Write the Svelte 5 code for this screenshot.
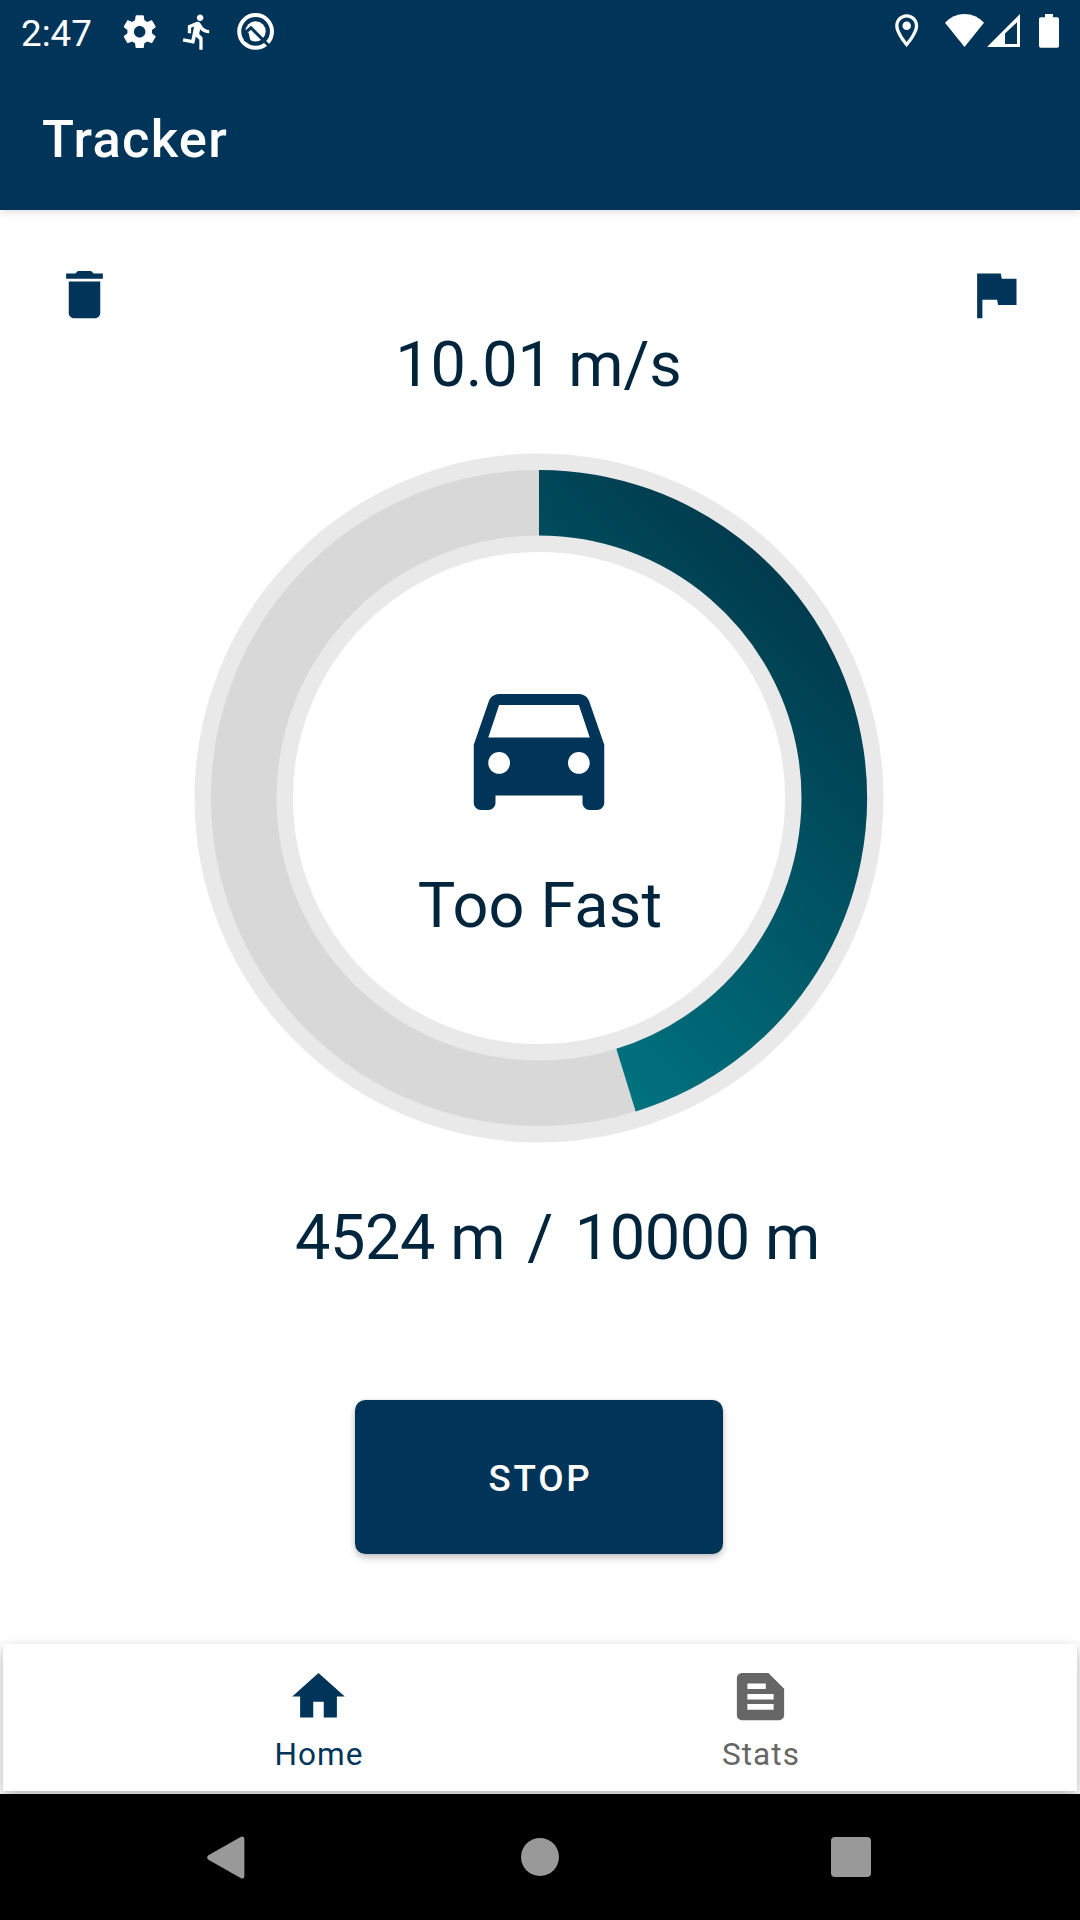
<script>
  const speed = '10.01 m/s';
  const distance = 4524;
  const goal = 10000;

  const band = 295.3;
  const angle = (distance / goal) * 2 * Math.PI;
  const endX = 345 + band * Math.sin(angle);
  const endY = 345 - band * Math.cos(angle);
  const large = distance / goal > 0.5 ? 1 : 0;
  const arc = `M345 ${345 - band}A${band} ${band} 0 ${large} 1 ${endX} ${endY}`;
</script>

<div class="screen">
  <header>
    <div class="status">
      <span class="clock">2:47</span>
      <svg class="gear" viewBox="0 0 24 24"><path d="M19.43 12.98c.04-.32.07-.64.07-.98s-.03-.66-.07-.98l2.11-1.65c.19-.15.24-.42.12-.64l-2-3.46c-.12-.22-.39-.3-.61-.22l-2.49 1c-.52-.4-1.08-.73-1.69-.98l-.38-2.65C14.46 2.18 14.25 2 14 2h-4c-.25 0-.46.18-.49.42l-.38 2.65c-.61.25-1.17.59-1.69.98l-2.49-1c-.23-.09-.49 0-.61.22l-2 3.46c-.13.22-.07.49.12.64l2.11 1.65c-.04.32-.07.65-.07.98s.03.66.07.98l-2.11 1.65c-.19.15-.24.42-.12.64l2 3.46c.12.22.39.3.61.22l2.49-1c.52.4 1.08.73 1.69.98l.38 2.65c.03.24.24.42.49.42h4c.25 0 .46-.18.49-.42l.38-2.65c.61-.25 1.17-.59 1.69-.98l2.49 1c.23.09.49 0 .61-.22l2-3.46c.12-.22.07-.49-.12-.64l-2.11-1.65zM12 15.5c-1.93 0-3.5-1.57-3.5-3.5s1.57-3.5 3.5-3.5 3.5 1.57 3.5 3.5-1.57 3.5-3.5 3.5z" /></svg>
      <svg class="runner" viewBox="0 0 24 24"><path d="M13.49 5.48c1.1 0 2-.9 2-2s-.9-2-2-2-2 .9-2 2 .9 2 2 2zm-3.6 13.9l1-4.4 2.1 2v6h2v-7.5l-2.1-2 .6-3c1.3 1.5 3.3 2.5 5.5 2.5v-2c-1.9 0-3.5-1-4.3-2.4l-1-1.6c-.4-.6-1-1-1.7-1-.3 0-.5.1-.8.1l-5.2 2.2v4.7h2v-3.4l1.8-.7-1.6 8.1-4.9-1-.4 2 7 1.4z" /></svg>
      <svg class="debug" viewBox="0 0 39 39">
        <circle class="hoop" cx="19.4" cy="19.2" r="16.2" />
        <circle cx="19.4" cy="19.2" r="10" />
        <path class="cut" d="M8 21.4L14.8 15.6L32.6 33.4" />
        <path class="notch" d="M8 21L12.4 20.2L14.6 29.6L8 29Z" />
      </svg>
      <span class="space"></span>
      <svg class="pin" viewBox="0 0 24 24"><path d="M12 2C8.13 2 5 5.13 5 9c0 5.25 7 13 7 13s7-7.75 7-13c0-3.87-3.13-7-7-7zM7 9c0-2.76 2.24-5 5-5s5 2.24 5 5c0 2.88-2.88 7.19-5 9.88C9.92 16.21 7 11.85 7 9z" /><circle cx="12" cy="9" r="2.6" /></svg>
      <svg class="wifi" viewBox="0 0 39 33"><path d="M19.5 33L0 8.8Q8 0 19.5 0T39 8.8Z" /></svg>
      <svg class="cell" viewBox="0 0 33 33"><path fill-rule="evenodd" d="M33 0V33H0ZM30 8.2L18 19.6V30H30Z" /></svg>
      <svg class="battery" viewBox="0 0 20 34"><path d="M6 0h8v3.2h4.2a1.8 1.8 0 0 1 1.8 1.8v27a1.8 1.8 0 0 1-1.8 1.8H1.8A1.8 1.8 0 0 1 0 32V5a1.8 1.8 0 0 1 1.8-1.8H6z" /></svg>
    </div>
    <h1>Tracker</h1>
  </header>

  <main>
    <div class="actions">
      <svg viewBox="0 0 24 24"><path d="M6 19c0 1.1.9 2 2 2h8c1.1 0 2-.9 2-2V7H6v12zM19 4h-3.5l-1-1h-5l-1 1H5v2h14V4z" /></svg>
      <svg viewBox="0 0 24 24"><path d="M14.4 6L14 4H5v17h2v-7h5.6l.4 2h7V6z" /></svg>
    </div>
    <p class="speed">{speed}</p>

    <div class="dial">
      <svg class="ring" viewBox="0 0 690 690">
        <defs>
          <linearGradient id="sweep" gradientUnits="userSpaceOnUse" x1="577" y1="113" x2="227" y2="463">
            <stop offset="0" stop-color="#003b4e" />
            <stop offset="0.25" stop-color="#004a5b" />
            <stop offset="1" stop-color="#007481" />
          </linearGradient>
        </defs>
        <circle class="edge" cx="345" cy="345" r={band} />
        <circle class="track" cx="345" cy="345" r={band} />
        <path class="value" d={arc} />
      </svg>
      <div class="center">
        <svg class="car" viewBox="0 0 24 24"><path d="M18.92 5.01C18.72 4.42 18.16 4 17.5 4h-11c-.66 0-1.21.42-1.42 1.01L3 11v8c0 .55.45 1 1 1h1c.55 0 1-.45 1-1v-1h12v1c0 .55.45 1 1 1h1c.55 0 1-.45 1-1v-8l-2.08-5.99zM6.5 15c-.83 0-1.5-.67-1.5-1.5S5.67 12 6.5 12s1.5.67 1.5 1.5S7.33 15 6.5 15zm11 0c-.83 0-1.5-.67-1.5-1.5s.67-1.5 1.5-1.5 1.5.67 1.5 1.5-.67 1.5-1.5 1.5zM5 10l1.5-4.5h11L19 10H5z" /></svg>
        <p>Too Fast</p>
      </div>
    </div>

    <div class="distance"><span>{distance} m</span><span>/</span><span>{goal} m</span></div>
    <button>STOP</button>
  </main>

  <div class="tabs-wrap">
    <nav class="tabs">
      <div class="tab on">
        <svg viewBox="0 0 24 24"><path d="M10 20v-6h4v6h5v-8h3L12 3 2 12h3v8z" /></svg>
        <span>Home</span>
      </div>
      <div class="tab">
        <svg viewBox="0 0 24 24"><path fill-rule="evenodd" d="M15 3H5c-1.1 0-2 .9-2 2v14c0 1.1.9 2 2 2h14c1.1 0 2-.9 2-2V9zM7 7h7v2.1H7zM17 17H7v-2.1h10zM17 13.1H7v-2.1h10z" /></svg>
        <span>Stats</span>
      </div>
    </nav>
  </div>

  <footer>
    <svg class="back" viewBox="0 0 38 43"><path d="M1 19.6Q-.6 21.5 1 23.4L34 42.3Q37.4 43.4 37.4 40V3Q37.4-.4 34 .7Z" /></svg>
    <span class="home"></span>
    <span class="recent"></span>
  </footer>
</div>

<style>
  :global(body) {
    margin: 0;
    overflow: hidden;
  }
  .screen {
    width: 1080px;
    height: 1920px;
    display: flex;
    flex-direction: column;
    background: #fff;
    font-family: Roboto, sans-serif;
    overflow: hidden;
  }
  svg {
    display: block;
    flex: none;
  }
  p, h1 {
    margin: 0;
  }
  header {
    height: 210px;
    box-sizing: border-box;
    flex: none;
    background: #003459;
    color: #fff;
    fill: #fff;
    box-shadow: 0 1px 8px rgba(0, 0, 0, 0.18);
  }
  .status {
    height: 63px;
    display: flex;
    align-items: flex-start;
    padding: 0 21px;
    box-sizing: border-box;
  }
  .clock {
    width: 99px;
    padding-top: 12px;
    font-size: 36.75px;
    line-height: 44px;
  }
  .gear, .runner, .debug, .pin {
    width: 39.4px;
    height: 39.4px;
    margin-top: 12px;
  }
  .runner {
    margin-left: 19px;
  }
  .debug {
    margin-left: 18.4px;
  }
  .hoop {
    fill: none;
    stroke: #fff;
    stroke-width: 4;
  }
  .cut {
    fill: none;
    stroke: #003459;
    stroke-width: 3;
  }
  .notch {
    fill: #003459;
  }
  .space {
    flex: 1;
  }
  .pin {
    margin-top: 11px;
    margin-right: 19px;
  }
  .wifi {
    width: 39px;
    height: 33px;
    margin: 14px 3px 0 0;
  }
  .cell {
    width: 33px;
    height: 33px;
    margin: 14px 19px 0 0;
  }
  .battery {
    width: 20px;
    height: 34px;
    margin-top: 14px;
  }
  h1 {
    padding: 45px 0 0 42px;
    font-size: 52.5px;
    line-height: 62px;
    font-weight: 500;
    letter-spacing: 1.3px;
  }
  main {
    flex: 1;
    display: flex;
    flex-direction: column;
    align-items: center;
    padding: 53px 2px 0 0;
    color: #00253d;
  }
  .actions {
    width: 974px;
    display: flex;
    justify-content: space-between;
    padding-left: 2px;
    fill: #003459;
  }
  .actions svg {
    width: 63px;
    height: 63px;
  }
  .speed, .center p, .distance {
    font-size: 63px;
    line-height: 74px;
  }
  .speed {
    margin-top: 2px;
    padding-right: 1px;
    letter-spacing: -.15px;
  }
  .dial {
    width: 690px;
    height: 690px;
    margin-top: 51px;
    display: grid;
    justify-items: center;
  }
  .ring, .center {
    grid-area: 1 / 1;
  }
  .ring {
    width: 690px;
    height: 690px;
    fill: none;
  }
  .edge {
    stroke: #e9e9e9;
    stroke-width: 98.4;
  }
  .track {
    stroke: #d8d8d8;
    stroke-width: 65.6;
  }
  .value {
    stroke: url(#sweep);
    stroke-width: 65.6;
  }
  .center {
    display: flex;
    flex-direction: column;
    align-items: center;
    padding-top: 212px;
  }
  .car {
    width: 174px;
    height: 174px;
    fill: #003459;
  }
  .center p {
    margin-top: 30px;
    padding-left: 2px;
    letter-spacing: .15px;
  }
  .distance {
    display: flex;
    margin-top: 58px;
    gap: 22px;
    padding-left: 37px;
    letter-spacing: -.4px;
  }
  button {
    width: 368px;
    height: 154px;
    margin-top: 125px;
    padding: 4px 0 0 3px;
    border: 0;
    border-radius: 10.5px;
    background: #003459;
    box-shadow: 0 4px 7px rgba(0, 0, 0, 0.22), 0 0 3px rgba(0, 0, 0, 0.12);
    color: #fff;
    font: 500 36.75px/44px Roboto, sans-serif;
    letter-spacing: 2.8px;
  }
  .tabs-wrap {
    height: 150px;
    flex: none;
    padding: 0 3px 3px;
    box-sizing: border-box;
  }
  .tabs {
    height: 147px;
    display: flex;
    justify-content: center;
    background: #fff;
    box-shadow: 0 6px 14px rgba(0, 0, 0, 0.28), 0 0 6px rgba(0, 0, 0, 0.03);
  }
  .tab {
    width: 442px;
    display: flex;
    flex-direction: column;
    align-items: center;
    padding-top: 21px;
    color: #666;
    fill: #666;
    font-size: 31.5px;
    line-height: 37px;
    letter-spacing: 1.05px;
  }
  .tab.on {
    color: #003459;
    fill: #003459;
  }
  .tab svg {
    width: 63px;
    height: 63px;
    margin-right: 2px;
  }
  .tab span {
    margin-top: 8px;
  }
  footer {
    height: 126px;
    flex: none;
    box-sizing: border-box;
    display: flex;
    align-items: center;
    justify-content: space-between;
    padding: 0 209px 0 206.5px;
    background: #000;
    fill: #999;
  }
  .back {
    width: 38px;
    height: 43px;
  }
  .home {
    width: 38.5px;
    height: 38.5px;
    margin-left: 4px;
    border-radius: 50%;
    background: #999;
  }
  .recent {
    width: 40px;
    height: 40px;
    border-radius: 4px;
    background: #999;
  }
</style>
